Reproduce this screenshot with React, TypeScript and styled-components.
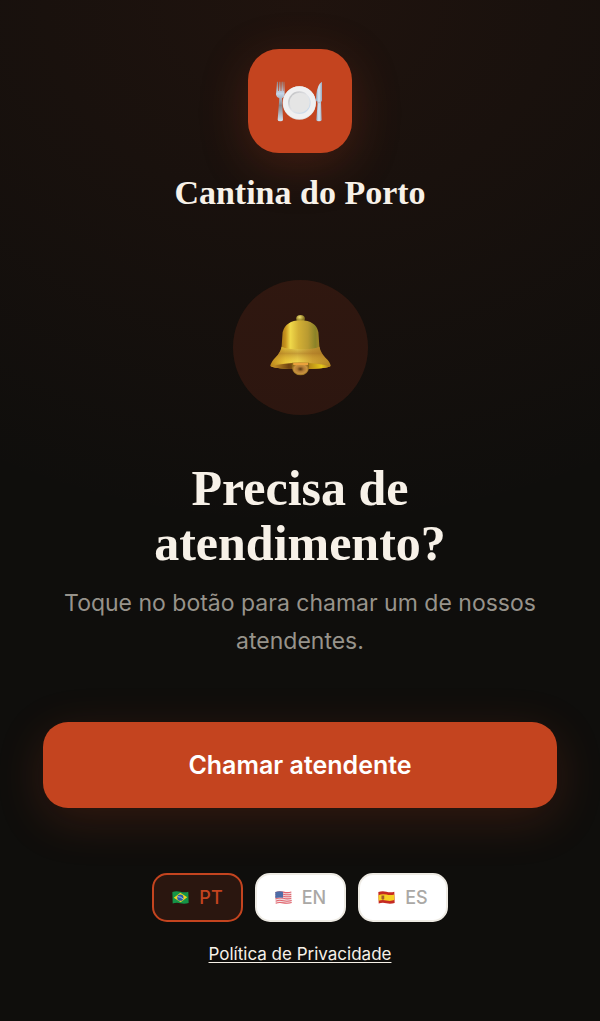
import React, {FC, useState} from "react";
import styled, {createGlobalStyle} from "styled-components";

const colors = {
  background: '#0f0e0c',
  primary: '#c4441f',
  cream: '#f7f1e8',
  muted: '#97938b',
};

const serif = '"Liberation Serif", serif';
const sans = 'Inter, "Liberation Sans", sans-serif';

const GlobalStyle = createGlobalStyle`
  * {
    box-sizing: border-box;
  }

  body {
    margin: 0;
    background: ${colors.background};
    font-family: ${sans};
    -webkit-font-smoothing: antialiased;
  }
`;

const Page = styled.div`
  display: flex;
  flex-direction: column;
  align-items: center;
  min-height: 100vh;
  padding: 49px 43px 54px;
  background: radial-gradient(ellipse 110% 52% at 50% 0, rgba(196, 68, 31, 0.09), transparent) ${colors.background};
`;

const Header = styled.header`
  display: flex;
  flex-direction: column;
  align-items: center;
  gap: 20px;
`;

const Logo = styled.div`
  display: flex;
  align-items: center;
  justify-content: center;
  width: 104px;
  height: 104px;
  border-radius: 31px;
  background: ${colors.primary};
  box-shadow: 0 12px 48px rgba(196, 68, 31, 0.25);
`;

const RestaurantName = styled.div`
  font-family: ${serif};
  font-size: 34px;
  font-weight: 700;
  line-height: 40px;
  color: ${colors.cream};
`;

const Main = styled.main`
  display: flex;
  flex-direction: column;
  align-items: center;
  align-self: stretch;
  margin-top: 67px;
`;

const BellCircle = styled.div`
  display: flex;
  align-items: center;
  justify-content: center;
  width: 135px;
  height: 135px;
  padding-bottom: 4px;
  border-radius: 50%;
  background: rgba(196, 68, 31, 0.15);
`;

const Title = styled.h1`
  margin: 46px 0 0;
  font-family: ${serif};
  font-size: 50px;
  font-weight: 700;
  line-height: 55px;
  text-align: center;
  color: ${colors.cream};
`;

const Subtitle = styled.p`
  margin: 13px 0 0;
  font-size: 23px;
  line-height: 38px;
  text-align: center;
  color: ${colors.muted};
`;

const CallButton = styled.button`
  align-self: stretch;
  height: 86px;
  margin-top: 62px;
  border: 0;
  border-radius: 25px;
  background: ${colors.primary};
  box-shadow: 0 12px 48px rgba(196, 68, 31, 0.2);
  font-family: ${sans};
  font-size: 25px;
  font-weight: 600;
  color: #fff;
  cursor: pointer;
`;

const Footer = styled.footer`
  display: flex;
  flex-direction: column;
  align-items: center;
  gap: 20px;
  margin-top: 65px;
`;

const Languages = styled.div`
  display: flex;
  gap: 12px;
`;

const LanguageButton = styled.button<{$active: boolean}>`
  display: flex;
  align-items: center;
  gap: 10px;
  height: 49px;
  padding: 0 18px;
  border: 2px solid ${({$active}) => $active ? colors.primary : '#eeebe4'};
  border-radius: 15px;
  background: ${({$active}) => $active ? '#2a160f' : '#fff'};
  font-family: ${sans};
  font-size: 18px;
  font-weight: 500;
  color: ${({$active}) => $active ? colors.primary : '#aaa8a5'};
  cursor: pointer;
`;

const PrivacyLink = styled.a`
  font-size: 17px;
  line-height: 24px;
  color: ${colors.cream};
  text-underline-offset: 2px;
`;

const PlateIcon: FC = () => (
  <svg width="47" height="41" viewBox="170 151 141 123" aria-hidden="true">
    <defs>
      <linearGradient id="metal" x1="0" y1="0" x2="0" y2="1">
        <stop offset="0" stopColor="#8d8584"/>
        <stop offset=".3" stopColor="#c3d6ea"/>
        <stop offset=".6" stopColor="#85838a"/>
        <stop offset="1" stopColor="#d5e2ef"/>
      </linearGradient>
      <linearGradient id="blade" x1="0" y1="0" x2="1" y2="0">
        <stop offset="0" stopColor="#8eaac4"/>
        <stop offset=".5" stopColor="#d8e4f0"/>
        <stop offset="1" stopColor="#98a9bd"/>
      </linearGradient>
      <linearGradient id="rim" x1="0" y1="0" x2="1" y2="1">
        <stop offset="0" stopColor="#b9b9bb"/>
        <stop offset=".5" stopColor="#e3e5e8"/>
        <stop offset="1" stopColor="#bfd5ec"/>
      </linearGradient>
    </defs>
    <path fill="url(#metal)" d="M173 153h3l1 28h2l1-28h3l1 28h2l1-28h3l1 28h1l1-28h2l1 39q0 7-8 11l3 64q0 5-8 5t-8-5l5-64q-9-4-10-11z"/>
    <path fill="url(#blade)" d="M308 153q-14 8-17 38l-1 18q0 4 5 4l-4 55q0 4 8 4t8-4l-2-55q3 0 3-4z"/>
    <path fill="#b4c2d3" d="M295 213h9l1 5h-11z"/>
    <circle cx="240" cy="217" r="50" fill="#dedddd"/>
    <circle cx="240" cy="216" r="49" fill="#f0f0f1"/>
    <circle cx="240" cy="216" r="34" fill="url(#rim)"/>
    <circle cx="241" cy="216" r="30" fill="#e5e5e5"/>
  </svg>
);

const BellIcon: FC = () => (
  <svg width="61" height="61" viewBox="148 136 184 184" aria-hidden="true">
    <defs>
      <linearGradient id="body" x1="0" y1="0" x2="1" y2="0">
        <stop offset="0" stopColor="#9c6e16"/>
        <stop offset=".14" stopColor="#c9951f"/>
        <stop offset=".25" stopColor="#f0d94a"/>
        <stop offset=".45" stopColor="#d3b035"/>
        <stop offset=".68" stopColor="#b99a31"/>
        <stop offset=".86" stopColor="#8b8328"/>
        <stop offset="1" stopColor="#aa8527"/>
      </linearGradient>
      <linearGradient id="skirt" x1="0" y1="0" x2="1" y2="0">
        <stop offset="0" stopColor="#b67c13"/>
        <stop offset=".25" stopColor="#e8c739"/>
        <stop offset=".45" stopColor="#f1dc55"/>
        <stop offset=".7" stopColor="#c79a32"/>
        <stop offset="1" stopColor="#a77920"/>
      </linearGradient>
      <linearGradient id="shade" x1="0" y1="0" x2="0" y2="1">
        <stop offset="0" stopColor="#a3772e" stopOpacity=".1"/>
        <stop offset=".3" stopColor="#a97424" stopOpacity=".6"/>
        <stop offset=".7" stopColor="#e8bd38" stopOpacity=".2"/>
        <stop offset="1" stopColor="#8a5b12" stopOpacity=".5"/>
      </linearGradient>
      <linearGradient id="mouth" x1="0" y1="0" x2="1" y2="0">
        <stop offset="0" stopColor="#d49b2a"/>
        <stop offset=".3" stopColor="#6d4211"/>
        <stop offset=".65" stopColor="#b78a17"/>
        <stop offset=".85" stopColor="#e5c719"/>
        <stop offset="1" stopColor="#aa7622"/>
      </linearGradient>
      <radialGradient id="knob" cx=".4" cy=".3">
        <stop offset="0" stopColor="#f1df70"/>
        <stop offset="1" stopColor="#8d7a24"/>
      </radialGradient>
      <radialGradient id="clapper">
        <stop offset="0" stopColor="#5c3a10"/>
        <stop offset=".4" stopColor="#b27b35"/>
        <stop offset=".75" stopColor="#c8923f"/>
        <stop offset="1" stopColor="#8b6819"/>
      </radialGradient>
    </defs>
    <ellipse cx="240" cy="147" rx="13" ry="11" fill="url(#knob)"/>
    <path fill="url(#body)" d="M240 152q-45 1-54 36l-3 44q-1 12-5 24h124q-4-12-5-24l-3-44q-7-35-54-36z"/>
    <path fill="url(#skirt)" d="M183 232q-4 18-17 31-14 13-17 27 10 9 91 9t91-9q-2-13-16-25-14-14-18-33-16 8-57 8t-57-8z"/>
    <path fill="url(#shade)" d="M183 232q-4 18-17 31-14 13-17 27 10 9 91 9t91-9q-2-13-16-25-14-14-18-33-16 8-57 8t-57-8z"/>
    <path fill="url(#mouth)" d="M151 291q40-11 89-11t90 11q-22 8-90 8t-89-8z"/>
    <path fill="url(#clapper)" d="M214 280h52v15q-4 23-26 23t-26-23z"/>
    <path fill="#eaa13c" d="M218 280h45v7h-45z"/>
  </svg>
);

// every flag sits on the same waving cloth
const cloth = 'M1 3Q12 -1 24 2T47 2L48 34Q36 38 24 35T2 36Z';

const BrazilFlag: FC = () => (
  <svg width="17" height="13" viewBox="0 0 49 37" aria-hidden="true">
    <path fill="#159447" d={cloth}/>
    <path fill="#eed51e" d="M5 19L24 5 44 18 25 32z"/>
    <circle cx="24" cy="19" r="9" fill="#265cab"/>
    <path stroke="#d9e9f3" strokeWidth="2" fill="none" d="M16 16q10 0 16 7"/>
  </svg>
);

const UsaFlag: FC = () => (
  <svg width="17" height="13" viewBox="0 0 49 37" aria-hidden="true">
    <path fill="#f1dfe2" d={cloth}/>
    <g fill="none" stroke="#e2636c" strokeWidth="3">
      <path d="M1 5Q12 0 24 3T47 3"/>
      <path d="M1 11Q12 6 24 9T47 9"/>
      <path d="M1 17Q12 12 24 15T47 15"/>
      <path d="M1 23Q12 18 24 21T47 21"/>
      <path d="M2 29Q12 25 24 28T48 27"/>
      <path d="M2 35Q12 31 24 34T48 33"/>
    </g>
    <path fill="#4d6ca7" d="M1 3Q12-1 23 2v17q-11-2-22 1z"/>
  </svg>
);

const SpainFlag: FC = () => (
  <svg width="17" height="13" viewBox="0 0 49 37" aria-hidden="true">
    <path fill="#c52a22" d={cloth}/>
    <path fill="#f6cf23" d="M1 12Q12 7 24 10T47 10V26Q36 30 24 27T2 28Z"/>
    <path fill="#a75c2b" d="M10 13h8v10q-4 4-8 0z"/>
  </svg>
);

interface Language {
  code: string;
  name: string;
  Flag: FC;
}

const languages: Language[] = [
  {code: 'PT', name: 'Português', Flag: BrazilFlag},
  {code: 'EN', name: 'English', Flag: UsaFlag},
  {code: 'ES', name: 'Español', Flag: SpainFlag},
];

const App: FC = () => {

  const [language, setLanguage] = useState<string>('PT');

  return (
    <>
      <GlobalStyle/>
      <Page>
        <Header>
          <Logo><PlateIcon/></Logo>
          <RestaurantName>Cantina do Porto</RestaurantName>
        </Header>
        <Main>
          <BellCircle><BellIcon/></BellCircle>
          <Title>Precisa de<br/>atendimento?</Title>
          <Subtitle>Toque no botão para chamar um de nossos atendentes.</Subtitle>
          <CallButton type="button">Chamar atendente</CallButton>
        </Main>
        <Footer>
          <Languages>
            {languages.map(({code, name, Flag}) => (
              <LanguageButton
                key={code}
                type="button"
                title={name}
                $active={code === language}
                aria-pressed={code === language}
                onClick={() => setLanguage(code)}
              >
                <Flag/>
                {code}
              </LanguageButton>
            ))}
          </Languages>
          <PrivacyLink href="#privacidade">Política de Privacidade</PrivacyLink>
        </Footer>
      </Page>
    </>
  )
};

export default App;
